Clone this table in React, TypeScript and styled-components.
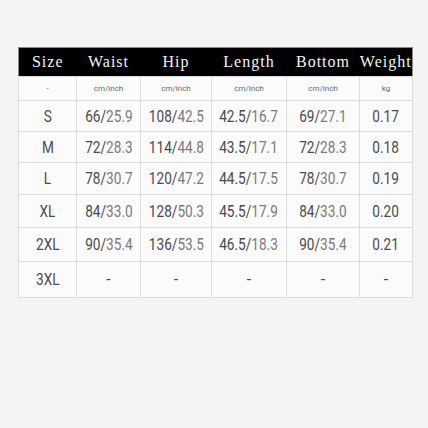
import React from "react";
import styled, { createGlobalStyle } from "styled-components";

const Global = createGlobalStyle`
	html, body {
		margin: 0;
		padding: 0;
		background: #f4f4f4;
	}
`;

const Page = styled.div`
	width: 428px;
	height: 428px;
	padding: 47px 0 0 18px;
	box-sizing: border-box;
`;

const Table = styled.table`
	width: 394px;
	table-layout: fixed;
	border-collapse: collapse;
	border: 1.5px solid #8a8a8a;
	background: #fbfbfb;
`;

const HeadRow = styled.tr`
	height: 29px;
	background: #000;
`;

const TH = styled.th`
	padding: 0;
	color: #f4f4f4;
	font-family: "Liberation Serif", "DejaVu Serif", serif;
	font-size: 16px;
	font-weight: normal;
	letter-spacing: 1px;
	text-align: center;
	white-space: nowrap;
	overflow: hidden;
`;

const TR = styled.tr<{ $h: number }>`
	height: ${p => p.$h}px;
`;

const TD = styled.td<{ $small?: boolean }>`
	padding: 0;
	border: 1px solid #dcdcdc;
	text-align: center;
	white-space: nowrap;
	color: ${p => (p.$small ? "#666" : "#4a4a4a")};
	font-family: "Roboto", "DejaVu Sans", sans-serif;
	font-size: ${p => (p.$small ? "8px" : "16px")};
`;

// narrow face, like the DIN-style digits of the picture
const Cond = styled.span`
	display: inline-block;
	transform: scaleX(0.85);
`;

const Light = styled.span`
	color: #7a7a7a;
`;

const cols = [58, 64, 71, 75, 73, 53];
const heads = ["Size", "Waist", "Hip", "Length", "Bottom", "Weight"];

const rows: { size: string; vals: string[]; w: string; h: number }[] = [
	{ size: "S", vals: ["66/25.9", "108/42.5", "42.5/16.7", "69/27.1"], w: "0.17", h: 31 },
	{ size: "M", vals: ["72/28.3", "114/44.8", "43.5/17.1", "72/28.3"], w: "0.18", h: 31 },
	{ size: "L", vals: ["78/30.7", "120/47.2", "44.5/17.5", "78/30.7"], w: "0.19", h: 32 },
	{ size: "XL", vals: ["84/33.0", "128/50.3", "45.5/17.9", "84/33.0"], w: "0.20", h: 33 },
	{ size: "2XL", vals: ["90/35.4", "136/53.5", "46.5/18.3", "90/35.4"], w: "0.21", h: 34 },
];

function Pair({ v }: { v: string }) {
	const [a, b] = v.split("/");
	return (
		<Cond>
			{a}/<Light>{b}</Light>
		</Cond>
	);
}

export default function App() {
	return (
		<>
			<Global />
			<Page>
				<Table>
					<colgroup>
						{cols.map((w, i) => (
							<col key={i} style={{ width: w }} />
						))}
					</colgroup>
					<thead>
						<HeadRow>
							{heads.map(h => (
								<TH key={h}>{h}</TH>
							))}
						</HeadRow>
					</thead>
					<tbody>
						<TR $h={24}>
							<TD $small>-</TD>
							<TD $small>cm/inch</TD>
							<TD $small>cm/inch</TD>
							<TD $small>cm/inch</TD>
							<TD $small>cm/inch</TD>
							<TD $small>kg</TD>
						</TR>
						{rows.map(r => (
							<TR $h={r.h} key={r.size}>
								<TD>
									<Cond>{r.size}</Cond>
								</TD>
								{r.vals.map((v, i) => (
									<TD key={i}>
										<Pair v={v} />
									</TD>
								))}
								<TD>
									<Cond>{r.w}</Cond>
								</TD>
							</TR>
						))}
						<TR $h={36}>
							<TD>
								<Cond>3XL</Cond>
							</TD>
							<TD>-</TD>
							<TD>-</TD>
							<TD>-</TD>
							<TD>-</TD>
							<TD>-</TD>
						</TR>
					</tbody>
				</Table>
			</Page>
		</>
	);
}
